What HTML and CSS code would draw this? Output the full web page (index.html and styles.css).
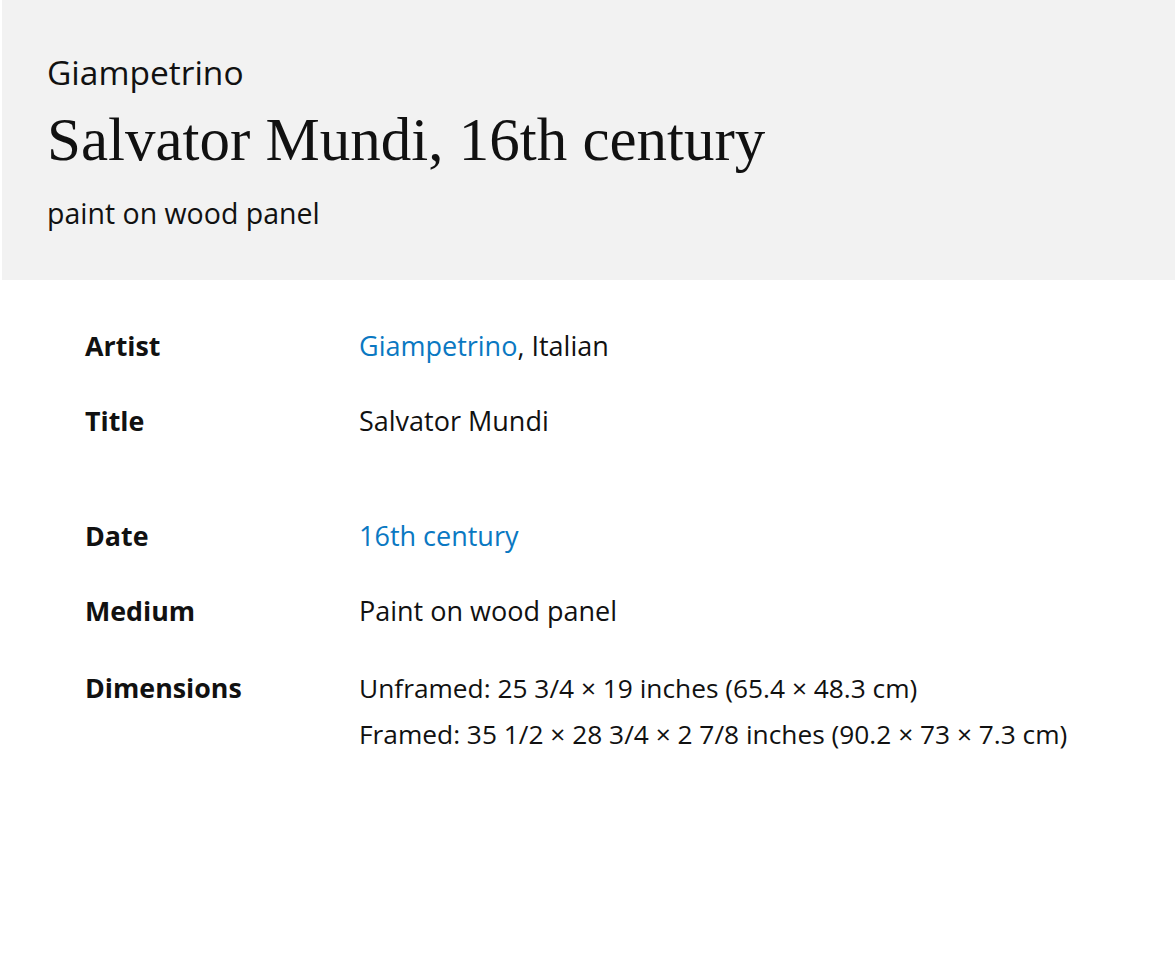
FILE: index.html
```html
<!DOCTYPE html>
<html lang="en">
<head>
<meta charset="utf-8">
<title>Salvator Mundi</title>
<link rel="stylesheet" href="styles.css">
</head>
<body>
<header class="hero">
  <p class="hero-artist">Giampetrino</p>
  <h1 class="hero-title">Salvator Mundi, 16th century</h1>
  <p class="hero-medium">paint on wood panel</p>
</header>
<main class="details">
  <dl class="group">
    <div class="row">
      <dt class="label">Artist</dt>
      <dd class="value"><a class="link" href="#">Giampetrino</a>, Italian</dd>
    </div>
    <div class="row">
      <dt class="label">Title</dt>
      <dd class="value">Salvator Mundi</dd>
    </div>
  </dl>
  <dl class="group">
    <div class="row">
      <dt class="label">Date</dt>
      <dd class="value"><a class="link" href="#">16th century</a></dd>
    </div>
    <div class="row">
      <dt class="label">Medium</dt>
      <dd class="value">Paint on wood panel</dd>
    </div>
    <div class="row row-dims">
      <dt class="label">Dimensions</dt>
      <dd class="value">Unframed: 25 3/4 × 19 inches (65.4 × 48.3 cm)<br>Framed: 35 1/2 × 28 3/4 × 2 7/8 inches (90.2 × 73 × 7.3 cm)</dd>
    </div>
  </dl>
</main>
</body>
</html>
```

FILE: styles.css
```css
html, body {
  margin: 0;
  padding: 0;
  background: #ffffff;
}
body {
  font-family: "Open Sans", "Noto Sans", sans-serif;
  color: #111111;
}
.hero {
  margin-left: 2px;
  background: #f2f2f2;
  height: 280px;
  box-sizing: border-box;
  padding: 52px 45px 0;
}
.hero-artist {
  margin: 0;
  font-size: 33.5px;
  line-height: 40px;
}
.hero-title {
  margin: 16px 0 0;
  font-family: "Liberation Serif", serif;
  font-weight: normal;
  font-size: 61px;
  line-height: 64px;
}
.hero-medium {
  margin: 21px 0 0;
  font-size: 28.5px;
  line-height: 40px;
}
.details {
  padding: 43px 0 0 85px;
}
.group {
  margin: 0 0 69px;
  display: flex;
  flex-direction: column;
  gap: 29px;
}
.row {
  display: flex;
}
.row-dims {
  margin-top: 2px;
}
.label {
  width: 274px;
  font-weight: bold;
  font-size: 26.8px;
  line-height: 46px;
  margin: 0;
}
.value {
  margin: 0;
  font-size: 27px;
  line-height: 46px;
}
.row-dims .value {
  font-size: 26.3px;
}
.link {
  color: #0a78c2;
  text-decoration: none;
}
```
